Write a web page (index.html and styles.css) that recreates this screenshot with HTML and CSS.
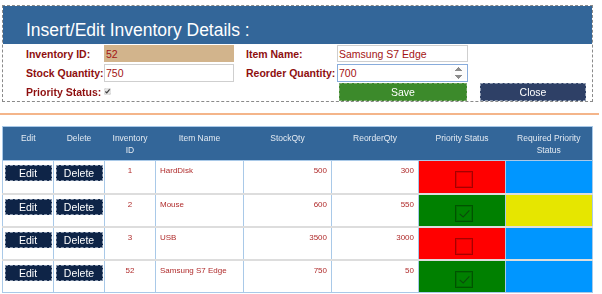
FILE: index.html
```html
<!DOCTYPE html>
<html>
<head>
<meta charset="utf-8">
<link rel="stylesheet" href="styles.css">
</head>
<body>
<div class="panel">
  <div class="panel-head">Insert/Edit Inventory Details :</div>
  <div class="form">
    <label class="lbl">Inventory ID:</label>
    <div class="cell"><input class="inp inp-id" type="text" value="52" readonly></div>
    <label class="lbl">Item Name:</label>
    <div class="cell"><input class="inp inp-w" type="text" value="Samsung S7 Edge"></div>
    <div></div>

    <label class="lbl">Stock Quantity:</label>
    <div class="cell"><input class="inp inp-stock" type="text" value="750"></div>
    <label class="lbl">Reorder Quantity:</label>
    <div class="cell"><input class="inp inp-w inp-focus" type="number" value="700" autofocus></div>
    <div></div>

    <label class="lbl">Priority Status:</label>
    <div class="cell"><input class="chk" type="checkbox" checked></div>
    <div></div>
    <div class="cell"><button class="btn btn-save">Save</button></div>
    <div class="cell"><button class="btn btn-close">Close</button></div>
  </div>
</div>
<div class="rule"></div>
<table class="grid">
  <colgroup>
    <col class="c51"><col class="c51"><col class="c51"><col class="c88"><col class="c88"><col class="c87"><col class="c87"><col class="c87">
  </colgroup>
  <thead>
    <tr>
      <th>Edit</th><th>Delete</th><th>Inventory<br>ID</th><th>Item Name</th><th>StockQty</th><th>ReorderQty</th><th>Priority Status</th><th>Required Priority<br>Status</th>
    </tr>
  </thead>
  <tbody>
    <tr>
      <td class="bt"><button class="rb">Edit</button></td>
      <td class="bt"><button class="rb">Delete</button></td>
      <td class="ctr">1</td>
      <td class="lft">HardDisk</td>
      <td class="num">500</td>
      <td class="num">300</td>
      <td class="pri red"><span class="box"></span></td>
      <td class="blue"></td>
    </tr>
    <tr>
      <td class="bt"><button class="rb">Edit</button></td>
      <td class="bt"><button class="rb">Delete</button></td>
      <td class="ctr">2</td>
      <td class="lft">Mouse</td>
      <td class="num">600</td>
      <td class="num">550</td>
      <td class="pri green"><span class="box"><svg viewBox="0 0 17 17" width="15" height="15"><path d="M3 9 L7 12.5 L14 5" fill="none" stroke="#0b4a0b" stroke-width="1.3"/></svg></span></td>
      <td class="yellow"></td>
    </tr>
    <tr>
      <td class="bt"><button class="rb">Edit</button></td>
      <td class="bt"><button class="rb">Delete</button></td>
      <td class="ctr">3</td>
      <td class="lft">USB</td>
      <td class="num">3500</td>
      <td class="num">3000</td>
      <td class="pri red"><span class="box"></span></td>
      <td class="blue"></td>
    </tr>
    <tr>
      <td class="bt"><button class="rb">Edit</button></td>
      <td class="bt"><button class="rb">Delete</button></td>
      <td class="ctr">52</td>
      <td class="lft">Samsung S7 Edge</td>
      <td class="num">750</td>
      <td class="num">50</td>
      <td class="pri green"><span class="box"><svg viewBox="0 0 17 17" width="15" height="15"><path d="M3 9 L7 12.5 L14 5" fill="none" stroke="#0b4a0b" stroke-width="1.3"/></svg></span></td>
      <td class="blue"></td>
    </tr>
  </tbody>
</table>
</body>
</html>
```
FILE: styles.css
```css
html, body {
  margin: 0;
  padding: 0;
  background: #fff;
  font-family: "Liberation Sans", Arial, sans-serif;
}

.panel {
  box-sizing: border-box;
  width: 591px;
  margin: 5px 0 0 2px;
  border: 1px dashed #8a8a8a;
}

.panel-head {
  box-sizing: border-box;
  height: 38px;
  background: #336699;
  color: #ffffff;
  font-size: 17.5px;
  line-height: 20px;
  padding: 14px 0 0 23px;
}

.form {
  display: grid;
  grid-template-columns: 78px 142px 91px 143px 106px;
  grid-template-rows: 19px 19px 19px;
  padding-left: 23px;
}

.lbl {
  display: flex;
  align-items: center;
  font-size: 10.5px;
  font-weight: bold;
  color: #8e0f0f;
  white-space: nowrap;
}

.cell {
  display: flex;
  align-items: center;
}

.inp {
  box-sizing: border-box;
  height: 18px;
  margin: 0;
  padding: 0 1px;
  font-family: "Liberation Sans", Arial, sans-serif;
  font-size: 10.5px;
  color: #a31414;
  border: 1px solid #cfcfcf;
  background: #fff;
  outline: none;
  border-radius: 0;
}

.inp-id {
  width: 130px;
  height: 17px;
  background: #d2b48c;
  border-color: #d2b48c;
}

.inp-stock {
  width: 130px;
}

.inp-w {
  width: 131px;
  height: 17px;
}

.inp-focus {
  height: 18px;
  border-color: #88acdc;
}

.inp-focus:focus {
  outline: none;
  border-color: #88acdc;
}

.chk {
  width: 7px;
  height: 7px;
  margin: 0;
  accent-color: #e4e4e4;
}

.btn {
  box-sizing: border-box;
  height: 18px;
  margin: 1px 0 0 0;
  padding: 0;
  font-family: "Liberation Sans", Arial, sans-serif;
  font-size: 10.5px;
  color: #ffffff;
  border-radius: 0;
}

.btn-save {
  width: 128px;
  margin-left: 2px;
  background: #3c8a2b;
  border: 1px dashed #7aa86a;
}

.btn-close {
  width: 106px;
  background: #2e4066;
  border: 1px dashed #8f9bb0;
}

.rule {
  width: 599px;
  height: 2px;
  margin-top: 11px;
  background: #f4b58a;
}

.grid {
  width: 591px;
  margin: 11px 0 0 2px;
  border-collapse: collapse;
  table-layout: fixed;
  font-family: "Liberation Sans", Arial, sans-serif;
  border: 1px solid #a9c9e8;
}

.c51 { width: 51px; }
.c88 { width: 88px; }
.c87 { width: 87px; }

.grid th {
  height: 34px;
  box-sizing: border-box;
  background: #336699;
  color: #e3eaf2;
  font-size: 8.5px;
  font-weight: normal;
  line-height: 12px;
  vertical-align: top;
  padding: 5px 0 0 0;
  text-align: center;
  border-bottom: 1px solid #a9c9e8;
}

.grid td {
  height: 33px;
  box-sizing: border-box;
  padding: 5px 0 0 0;
  vertical-align: top;
  font-size: 8px;
  line-height: 10px;
  color: #b02c2c;
  border-left: 1px solid #a9c9e8;
  border-right: 1px solid #a9c9e8;
  border-bottom: 2px solid #dddddd;
}

.grid tbody tr:last-child td {
  border-bottom: 1px solid #a9c9e8;
}

.grid td.bt {
  padding-top: 4px;
  text-align: center;
}

.rb {
  box-sizing: border-box;
  width: 47px;
  height: 16px;
  margin: 0;
  padding: 0;
  background: #0e2447;
  border: 1px dashed #8796ad;
  border-radius: 0;
  color: #ffffff;
  font-family: "Liberation Sans", Arial, sans-serif;
  font-size: 10.5px;
}

.ctr { text-align: center; }
.lft { padding-left: 4px !important; text-align: left; }
.num { text-align: right; padding-right: 4px !important; }

.pri { padding-top: 10px !important; }

.red { background: #ff0000; }
.green { background: #008000; }
.blue { background: #0096ff; }
.yellow { background: #e6e600; }

.box {
  display: block;
  box-sizing: border-box;
  width: 18px;
  height: 17px;
  margin: 0 auto;
  position: relative;
  left: 2px;
  border: 1px solid rgba(0, 0, 0, 0.35);
  box-shadow: inset 0 0 0 1px rgba(0, 0, 0, 0.12);
}

.box svg {
  display: block;
  margin: 0 auto;
}
```
